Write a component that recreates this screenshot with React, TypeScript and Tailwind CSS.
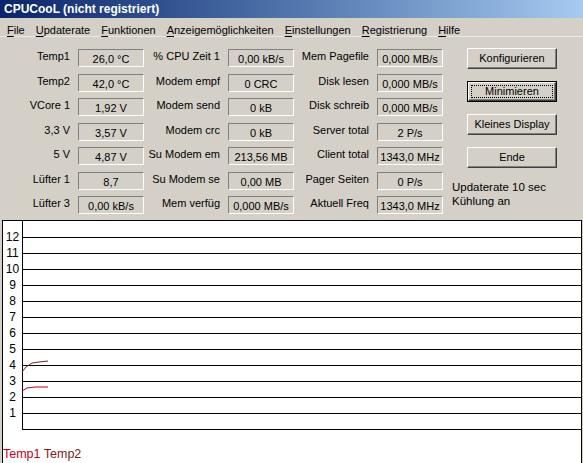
import React from "react";

const col1 = [
  ["Temp1", "26,0 °C"],
  ["Temp2", "42,0 °C"],
  ["VCore 1", "1,92 V"],
  ["3,3 V", "3,57 V"],
  ["5 V", "4,87 V"],
  ["Lüfter 1", "8,7"],
  ["Lüfter 3", "0,00 kB/s"],
];

const col2 = [
  ["% CPU Zeit 1", "0,00 kB/s"],
  ["Modem empf", "0 CRC"],
  ["Modem send", "0 kB"],
  ["Modem crc", "0 kB"],
  ["Su Modem em", "213,56 MB"],
  ["Su Modem se", "0,00 MB"],
  ["Mem verfüg", "0,000 MB/s"],
];

const col3 = [
  ["Mem Pagefile", "0,000 MB/s"],
  ["Disk lesen", "0,000 MB/s"],
  ["Disk schreib", "0,000 MB/s"],
  ["Server total", "2 P/s"],
  ["Client total", "1343,0 MHz"],
  ["Pager Seiten", "0 P/s"],
  ["Aktuell Freq", "1343,0 MHz"],
];

const menu = [
  ["F", "ile"],
  ["U", "pdaterate"],
  ["F", "unktionen"],
  ["A", "nzeigemöglichkeiten"],
  ["E", "instellungen"],
  ["R", "egistrierung"],
  ["H", "ilfe"],
];

function Column({ rows, labelWidth }: { rows: string[][]; labelWidth: string }) {
  return (
    <div className="flex flex-col gap-[6.5px]">
      {rows.map(([label, value]) => (
        <div key={label} className="flex items-start h-[18px]">
          <span className={`${labelWidth} shrink-0 text-right leading-[13px] pt-[1px] whitespace-nowrap`}>{label}</span>
          <div className="ml-[8px] w-[66px] h-[18px] shrink-0 border border-t-[#808080] border-l-[#808080] border-b-white border-r-white pt-[3px] text-center leading-[13px] whitespace-nowrap">
            {value}
          </div>
        </div>
      ))}
    </div>
  );
}

function WinButton({ text, isDefault }: { text: string; isDefault?: boolean }) {
  if (isDefault) {
    return (
      <div className="w-[90px] h-[21px] border border-black">
        <div className="h-full border border-t-white border-l-white border-b-[#404040] border-r-[#404040] shadow-[inset_-1px_-1px_#808080] p-[2px]">
          <div className="h-full border border-dotted border-black flex items-center justify-center leading-[13px]">
            {text}
          </div>
        </div>
      </div>
    );
  }
  return (
    <div className="w-[90px] h-[21px] border border-t-white border-l-white border-b-[#404040] border-r-[#404040] shadow-[inset_-1px_-1px_#808080] flex items-center justify-center leading-[13px]">
      {text}
    </div>
  );
}

export default function App() {
  const levels = [12, 11, 10, 9, 8, 7, 6, 5, 4, 3, 2, 1];

  return (
    <div className="h-[463px] w-[583px] overflow-hidden flex flex-col bg-[#d4d0c8] text-black text-[11px] font-['Liberation_Sans',Arial,sans-serif]">
      {/* title bar */}
      <div className="h-[18px] shrink-0 bg-linear-to-r from-[#0a246a] to-[#a6caf0] flex items-center pl-[4px]">
        <span className="text-white font-bold text-[12px] leading-[14px]">CPUCooL (nicht registriert)</span>
      </div>

      {/* menu */}
      <div className="h-[19px] shrink-0 flex gap-[11px] pl-[7px] pt-[6px] leading-[13px] border-b border-b-[#ece9e2]">
        {menu.map(([first, rest], i) => (
          <span key={i} className="whitespace-nowrap">
            <span className="underline underline-offset-[2px]">{first}</span>
            {rest}
          </span>
        ))}
      </div>

      {/* panel */}
      <div className="h-[183px] shrink-0 flex pt-[12px]">
        <Column rows={col1} labelWidth="w-[70px]" />
        <Column rows={col2} labelWidth="w-[76px]" />
        <Column rows={col3} labelWidth="w-[75px]" />
        <div className="ml-[9px] flex flex-col">
          <div className="ml-[15px] -mt-[1px] flex flex-col gap-[12px]">
            <WinButton text="Konfigurieren" />
            <WinButton text="Minimieren" isDefault />
            <WinButton text="Kleines Display" />
            <WinButton text="Ende" />
          </div>
          <div className="mt-[13px] text-[11.5px] leading-[13.5px] whitespace-nowrap">
            <div>Updaterate 10 sec</div>
            <div>Kühlung an</div>
          </div>
        </div>
      </div>

      {/* chart */}
      <div className="flex-1 ml-[2px] mr-[1px] bg-white border-t border-l border-r border-black flex flex-col">
        <div className="flex">
          <div className="w-[19px] shrink-0 pt-[8px] flex flex-col text-[12px]">
            {levels.map((n) => (
              <div key={n} className="h-[16px] leading-[16px] text-center">
                {n}
              </div>
            ))}
          </div>
          <div className="relative flex-1 border-l border-black pt-[1px] flex flex-col">
            {Array.from({ length: 13 }).map((_, i) => (
              <div key={i} className="h-[16px] border-b border-black" />
            ))}
            <svg className="absolute left-0 top-0 overflow-visible" width="60" height="200">
              <polyline points="-1,151 3,146 9,142 16,141 25,140" fill="none" stroke="#7a2414" strokeWidth="1" />
              <polyline points="-1,170 4,167 12,166 25,166" fill="none" stroke="#c4001f" strokeWidth="1" />
            </svg>
          </div>
        </div>
        <div className="mt-[17px] text-[12.5px] leading-[15px] whitespace-nowrap">
          <span className="text-[#c4001f]">Temp1</span> <span className="text-[#7a2414]">Temp2</span>
        </div>
      </div>
    </div>
  );
}
